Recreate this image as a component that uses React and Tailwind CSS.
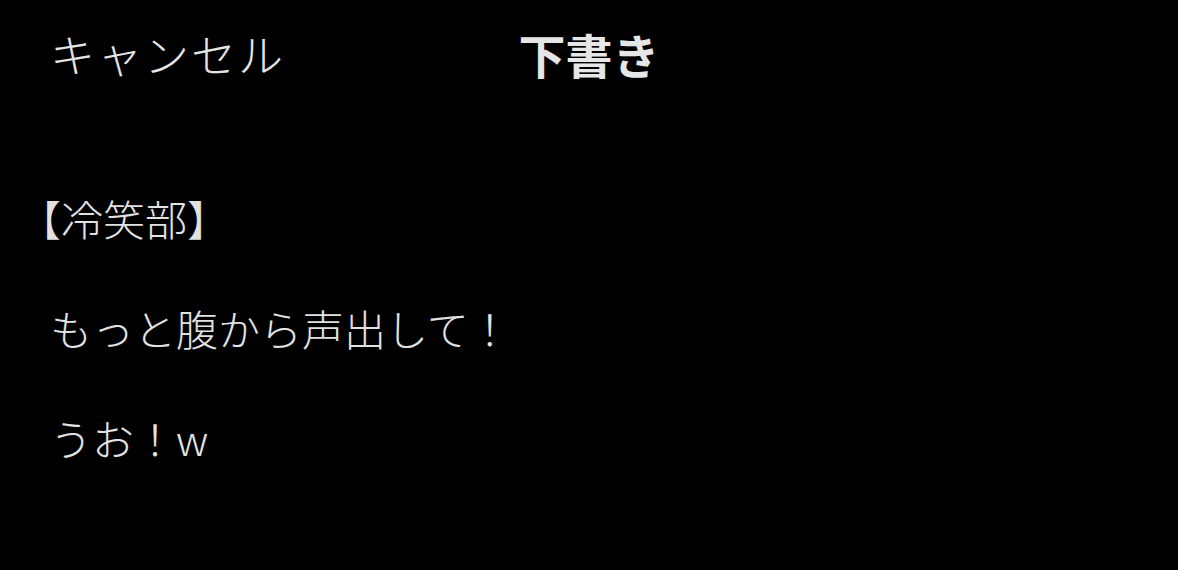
export default function App() {
  const font = { fontFamily: '"Noto Sans CJK JP", "Noto Sans", sans-serif' }

  return (
    <div className="h-[570px] w-[1178px] overflow-hidden bg-black text-[#e2e2e2]" style={font}>
      {/* Header */}
      <div className="relative flex h-[110px] items-start px-[50px] pt-[23px]">
        <button className="text-[45px] font-light leading-[62px] tracking-[2px] text-[#e4e4e4]">キャンセル</button>
        <h1 className="absolute left-0 right-0 top-[23px] text-center text-[47px] font-bold leading-[62px] text-[#e6e6e6]">
          下書き
        </h1>
      </div>

      {/* Draft body */}
      <div className="pl-[50px] pt-[80px] text-[42px] font-light leading-[55px]">
        <p className="-ml-[31px]">【冷笑部】</p>
        <p>&nbsp;</p>
        <p>もっと腹から声出して！</p>
        <p>&nbsp;</p>
        <p>うお！w</p>
      </div>
    </div>
  )
}
